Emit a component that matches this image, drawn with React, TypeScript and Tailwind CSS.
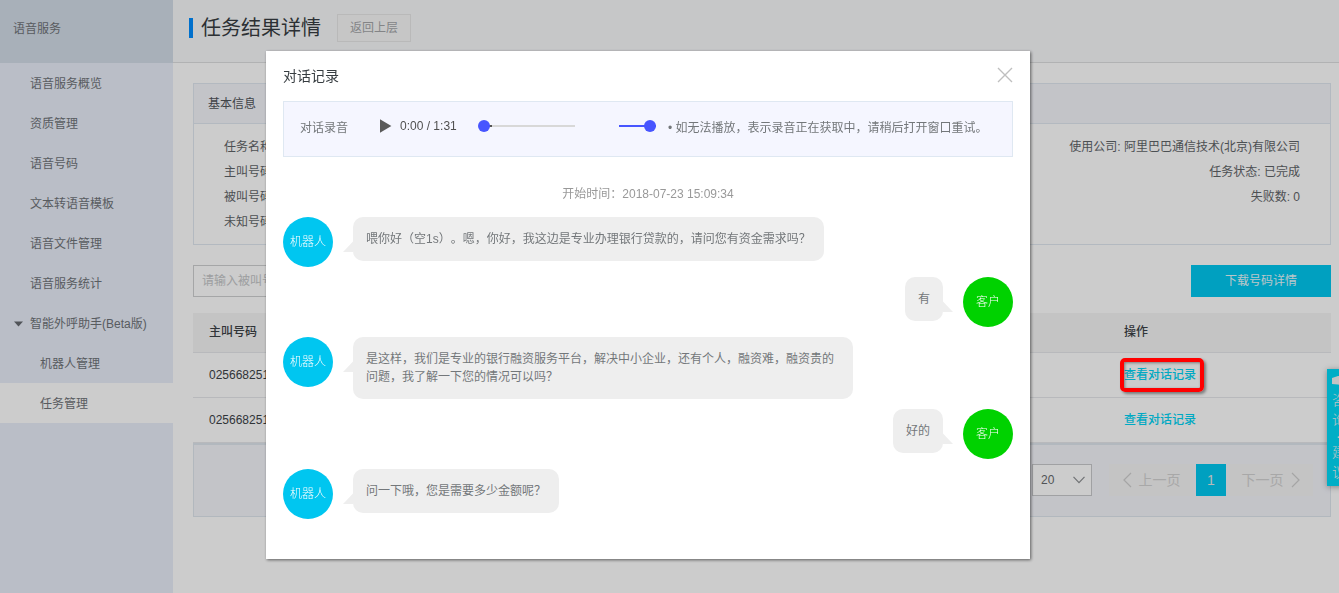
import React from "react";

const navItems = ["语音服务概览", "资质管理", "语音号码", "文本转语音模板", "语音文件管理", "语音服务统计"];

const infoRows = [
  { label: "任务名称", right: "使用公司: 阿里巴巴通信技术(北京)有限公司" },
  { label: "主叫号码", right: "任务状态: 已完成" },
  { label: "被叫号码", right: "失败数: 0" },
  { label: "未知号码", right: "" },
];

const calls = [
  { phone: "025668251", marked: true },
  { phone: "025668251", marked: false },
];

type Message = { from: "robot" | "customer"; text: string };

const messages: Message[] = [
  { from: "robot", text: "喂你好（空1s）。嗯，你好，我这边是专业办理银行贷款的，请问您有资金需求吗？" },
  { from: "customer", text: "有" },
  {
    from: "robot",
    text: "是这样，我们是专业的银行融资服务平台，解决中小企业，还有个人，融资难，融资贵的问题，我了解一下您的情况可以吗？",
  },
  { from: "customer", text: "好的" },
  { from: "robot", text: "问一下哦，您是需要多少金额呢？" },
];

function Sidebar() {
  return (
    <aside className="w-[173px] shrink-0 bg-[#e9eef9] text-[#6f7378]">
      <div className="flex h-[63px] items-center bg-[#d3dde8] px-[13px] pb-[6px]">语音服务</div>
      <nav>
        {navItems.map((item) => (
          <a key={item} href="#" className="flex h-10 items-center pt-[2px] pl-[30px]">
            {item}
          </a>
        ))}
        <a href="#" className="flex h-10 items-center pt-[2px] pl-[14px]">
          <svg viewBox="0 0 9 6" className="mr-[7px] h-[6px] w-[9px]" fill="#666a70">
            <path d="M0 0.5h9L4.5 5.5z" />
          </svg>
          智能外呼助手(Beta版)
        </a>
        <a href="#" className="flex h-10 items-center pt-[2px] pl-10">
          机器人管理
        </a>
        <a href="#" aria-current="page" className="flex h-10 items-center bg-white pt-[2px] pl-10">
          任务管理
        </a>
      </nav>
    </aside>
  );
}

function InfoCard() {
  return (
    <section className="border border-[#e0e8f0]">
      <h2 className="flex h-10 items-center border-b border-[#e0e8f0] bg-[#f4f5fb] px-[14px] text-[#505459]">基本信息</h2>
      <div className="px-[30px] py-[10px]">
        {infoRows.map((row) => (
          <div key={row.label} className="flex h-[25px] items-center justify-between">
            <span>{row.label}</span>
            <span>{row.right}</span>
          </div>
        ))}
      </div>
    </section>
  );
}

function CallTable() {
  return (
    <table className="mt-4 w-full border-collapse text-left">
      <thead>
        <tr className="h-[39px] border-b border-[#e6e8eb] bg-[#f5f5f5] text-[#3c4247]">
          <th className="px-4 font-medium">主叫号码</th>
          <th className="w-[223px] px-4 font-medium">操作</th>
        </tr>
      </thead>
      <tbody>
        {calls.map((call, i) => (
          <tr key={i} className="h-[45px] border-b border-[#e6e8eb] text-[#3c4247]">
            <td className="px-4">{call.phone}</td>
            <td className="px-4">
              <a href="#" className="relative inline-block align-middle leading-[18px] font-medium text-[#00d4f4]">
                查看对话记录
                {call.marked && (
                  <span className="pointer-events-none absolute -top-2 -right-2 -bottom-2 -left-1 z-20 rounded-[5px] border-4 border-[#ff0000] shadow-[2px_2px_3px_rgba(0,0,0,0.4),inset_1px_1px_3px_rgba(0,0,0,0.4)]" />
                )}
              </a>
            </td>
          </tr>
        ))}
      </tbody>
    </table>
  );
}

function Chevron({ d }: { d: string }) {
  return (
    <svg viewBox="0 0 10 16" className="h-4 w-[10px]" fill="none" stroke="#cfcfcf" strokeWidth="1.2">
      <path d={d} />
    </svg>
  );
}

function Pagination() {
  return (
    <div className="flex h-[74px] items-center justify-end border border-t-2 border-[#dfe6ee] bg-[#f4f5fb] pr-[17px]">
      <div className="relative mr-[17px]">
        <select
          aria-label="每页条数"
          className="h-8 w-[60px] appearance-none border border-[#c8cacc] bg-white pl-2 text-[12px] text-[#66696c]"
          defaultValue="20"
        >
          <option>20</option>
          <option>50</option>
        </select>
        <svg
          viewBox="0 0 12 8"
          className="pointer-events-none absolute top-3 right-[7px] h-2 w-3"
          fill="none"
          stroke="#8c8f92"
          strokeWidth="1.2"
        >
          <path d="M0.5 0.8L6 6.6L11.5 0.8" />
        </svg>
      </div>
      <button className="flex h-8 w-[84px] items-center justify-center gap-[7px] bg-[#f5f5f5] text-[14px] text-[#d2d2d2]">
        <Chevron d="M9 1L2 8l7 7" />
        上一页
      </button>
      <button className="mx-[3px] h-8 w-[30px] bg-[#00c8f0] text-[14px] text-[#e8e8e8]">1</button>
      <button className="flex h-8 w-[84px] items-center justify-center gap-[7px] bg-[#f5f5f5] text-[14px] text-[#d2d2d2]">
        下一页
        <Chevron d="M1 1l7 7l-7 7" />
      </button>
    </div>
  );
}

function FeedbackTab() {
  return (
    <a
      href="#"
      aria-label="咨询·建议"
      className="absolute top-[369px] -right-[18px] flex h-[117px] w-[30px] flex-col items-start bg-[#00daf8] pt-[6px] pl-[5px] text-[14px] leading-5 font-light text-[#e8f8fa] shadow-[0_1px_6px_rgba(0,0,0,0.35)]"
    >
      <svg viewBox="0 0 22 12" className="mb-[3px] h-3 w-[22px] shrink-0" fill="#f4f4f4">
        <path d="M0 3L6 1h10l6 2v6l-6 2h-5L6 9.500L0 9z" />
      </svg>
      <span>咨</span>
      <span>询</span>
      <span className="h-3 pl-1 leading-3">·</span>
      <span>建</span>
      <span>议</span>
    </a>
  );
}

function AudioPlayer() {
  return (
    <div className="ml-8 flex items-center pb-1 text-[#505050]">
      <button aria-label="播放">
        <svg viewBox="0 0 12 14" className="h-[14px] w-3" fill="#5a5a5a">
          <path d="M0 0.2L11.4 7L0 13.8z" />
        </svg>
      </button>
      <span className="ml-2 w-[58px]">0:00 / 1:31</span>
      <input
        type="range"
        aria-label="播放进度"
        min={0}
        max={91}
        defaultValue={0}
        className="ml-5 h-3 w-[97px] appearance-none bg-transparent [&::-webkit-slider-runnable-track]:h-[2px] [&::-webkit-slider-runnable-track]:bg-[linear-gradient(to_right,transparent_6px,#555_6px,#555_14px,#d8d8d8_14px)] [&::-webkit-slider-thumb]:-mt-[5px] [&::-webkit-slider-thumb]:h-3 [&::-webkit-slider-thumb]:w-3 [&::-webkit-slider-thumb]:appearance-none [&::-webkit-slider-thumb]:rounded-full [&::-webkit-slider-thumb]:bg-[#4755ff]"
      />
      <input
        type="range"
        aria-label="音量"
        min={0}
        max={100}
        defaultValue={100}
        className="ml-11 h-3 w-[37px] appearance-none bg-transparent [&::-webkit-slider-runnable-track]:h-[2px] [&::-webkit-slider-runnable-track]:bg-[#4755ff] [&::-webkit-slider-thumb]:-mt-[5px] [&::-webkit-slider-thumb]:h-3 [&::-webkit-slider-thumb]:w-3 [&::-webkit-slider-thumb]:appearance-none [&::-webkit-slider-thumb]:rounded-full [&::-webkit-slider-thumb]:bg-[#4755ff]"
      />
    </div>
  );
}

function ChatRow({ message }: { message: Message }) {
  const robot = message.from === "robot";
  return (
    <li className={robot ? "flex items-start gap-5" : "flex flex-row-reverse items-start gap-5"}>
      <span
        className={
          robot
            ? "flex size-[50px] shrink-0 items-center justify-center rounded-full bg-[#00c6f0] font-light text-white"
            : "flex size-[50px] shrink-0 items-center justify-center rounded-full bg-[#00d200] font-light text-white"
        }
      >
        {robot ? "机器人" : "客户"}
      </span>
      <p className="relative max-w-[500px] rounded-[10px] bg-[#eeeeee] p-[13px] leading-[18px] text-[#73777a]">
        {message.text}
        <svg
          viewBox="0 0 10 11"
          className={robot ? "absolute top-6 -left-[10px] h-[11px] w-[10px]" : "absolute top-6 -right-[10px] h-[11px] w-[10px]"}
          fill="#eeeeee"
        >
          <path d={robot ? "M10 0.5V11H0z" : "M0 0.5V11H10z"} />
        </svg>
      </p>
    </li>
  );
}

function RecordDialog() {
  return (
    <div className="fixed inset-0 z-10 flex items-start justify-center bg-black/20 pt-[51px] pr-[43px]">
      <div
        role="dialog"
        aria-labelledby="record-title"
        className="w-full max-w-[764px] bg-white px-[17px] pb-10 shadow-[1px_1px_3px_rgba(0,0,0,0.55)]"
      >
        <div className="flex h-[50px] items-center justify-between">
          <h2 id="record-title" className="text-[14px] text-[#373d41]">
            对话记录
          </h2>
          <button aria-label="关闭" className="pb-[2px]">
            <svg viewBox="0 0 16 16" className="size-4" fill="none" stroke="#bfbfbf" strokeWidth="1.4">
              <path d="M1 1l14 14M15 1L1 15" />
            </svg>
          </button>
        </div>
        <div className="flex h-14 items-center border border-[#dfe8f2] bg-[#f5f6ff] px-4 pb-[2px] text-[#73777a]">
          <span>对话录音</span>
          <AudioPlayer />
          <span className="ml-3">• 如无法播放，表示录音正在获取中，请稍后打开窗口重试。</span>
        </div>
        <p className="pt-7 pb-[14px] text-center leading-[18px] text-[#999999]">开始时间：2018-07-23 15:09:34</p>
        <ul className="flex flex-col gap-[10px]">
          {messages.map((message) => (
            <ChatRow key={message.text} message={message} />
          ))}
        </ul>
      </div>
    </div>
  );
}

export default function App() {
  return (
    <div className="relative flex min-h-screen overflow-hidden bg-white font-['Liberation_Sans','Noto_Sans_CJK_SC',sans-serif] text-[12px] leading-[18px] text-[#606468] [text-spacing-trim:space-all]">
      <Sidebar />
      <main className="min-w-0 flex-1">
        <header className="flex h-[63px] items-center border-b border-[#dedfe0] bg-[#f8f9fb] pb-[6px] pl-4">
          <span className="h-5 w-1 bg-[#008cff]" />
          <h1 className="ml-2 text-[20px] leading-7 text-[#373d41]">任务结果详情</h1>
          <button className="ml-4 h-7 w-[74px] border border-[#e8e8e8] bg-[#f8f8f8] text-[#a4a6a8]">返回上层</button>
        </header>
        <div className="pt-5 pr-2 pl-5">
          <InfoCard />
          <div className="mt-5 flex justify-between">
            <input
              type="text"
              aria-label="被叫号码"
              placeholder="请输入被叫号码"
              className="h-8 w-[200px] border border-[#cfd0d1] bg-white px-2 placeholder:text-[#c4c6c8]"
            />
            <button className="h-8 w-[140px] bg-[#00c8f0] text-[#e8f8fc]">下载号码详情</button>
          </div>
          <CallTable />
          <Pagination />
        </div>
      </main>
      <FeedbackTab />
      <RecordDialog />
    </div>
  );
}
